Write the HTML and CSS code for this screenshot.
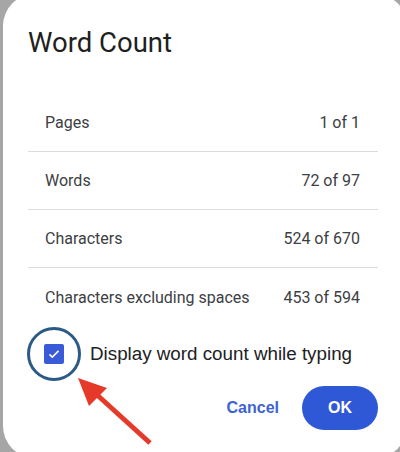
FILE: index.html
```html
<!DOCTYPE html>
<html lang="en">
    <head>
        <meta charset="UTF-8" />
        <meta name="viewport" content="width=device-width, initial-scale=1" />
        <title>Word Count</title>
        <link rel="stylesheet" href="styles.css">
    </head>
    <body>
        <div class="dialog">
            <h1 class="title">Word Count</h1>
            <div class="stats">
                <div class="row"><span>Pages</span><span>1 of 1</span></div>
                <div class="row"><span>Words</span><span>72 of 97</span></div>
                <div class="row"><span>Characters</span><span>524 of 670</span></div>
                <div class="row"><span>Characters excluding spaces</span><span>453 of 594</span></div>
            </div>
            <label class="option">
                <span class="checkbox">
                    <svg viewBox="0 0 20 20" width="14" height="14">
                        <path d="M3.5 10.5l4 4 9-9" fill="none" stroke="#fff" stroke-width="2.2" />
                    </svg>
                </span>
                <span>Display word count while typing</span>
            </label>
            <div class="actions">
                <button class="btn-text">Cancel</button>
                <button class="btn-primary">OK</button>
            </div>
        </div>

        <!-- marcação da captura: círculo e seta -->
        <svg class="annotation" viewBox="0 0 400 452" width="400" height="452">
            <circle cx="54" cy="354" r="25.5" fill="none" stroke="#2c5a86" stroke-width="3" />
            <line x1="150" y1="443" x2="95" y2="393" stroke="#e5392a" stroke-width="5" />
            <polygon points="78,378 107,388 89,406" fill="#e5392a" />
        </svg>
    </body>
</html>
```

FILE: styles.css
```css
* {
    box-sizing: border-box;
    margin: 0;
    padding: 0;
}
body {
    width: 400px;
    height: 452px;
    overflow: hidden;
    background: #a6a6a6;
    font-family: Roboto, "Liberation Sans", sans-serif;
    color: #202124;
}
.dialog {
    width: 404px;
    height: 464px;
    margin: -6px 0 0 3px;
    padding: 33px 29px 0 25px;
    background: #fff;
    border-radius: 32px;
}
.title {
    font-size: 27.5px;
    font-weight: 400;
    line-height: 32px;
    color: #1f1f1f;
    margin-bottom: 35px;
}
.row {
    display: flex;
    justify-content: space-between;
    align-items: center;
    height: 58px;
    padding: 0 18px 0 17px;
    font-size: 16px;
    color: #3c4043;
    border-bottom: 1px solid #dadce0;
}
.row:last-child {
    border-bottom: none;
}
.option {
    display: flex;
    align-items: center;
    gap: 26px;
    height: 40px;
    margin-top: 8px;
    padding-left: 16px;
    font-family: "Liberation Sans", sans-serif;
    font-size: 18.8px;
    color: #202124;
}
.checkbox {
    display: flex;
    align-items: center;
    justify-content: center;
    width: 20px;
    height: 20px;
    border-radius: 2px;
    background: #3a5bd7;
}
.actions {
    display: flex;
    justify-content: flex-end;
    align-items: center;
    gap: 11px;
    margin-top: 12px;
}
.actions button {
    font-family: "Liberation Sans", sans-serif;
    font-size: 16px;
    font-weight: 700;
    border: none;
    cursor: pointer;
}
.btn-text {
    background: none;
    color: #3d63d1;
    padding: 0 12px;
    height: 44px;
}
.btn-primary {
    width: 76px;
    height: 44px;
    border-radius: 22px;
    background: #2f58d6;
    color: #fff;
}
.annotation {
    position: absolute;
    top: 0;
    left: 0;
}
```
